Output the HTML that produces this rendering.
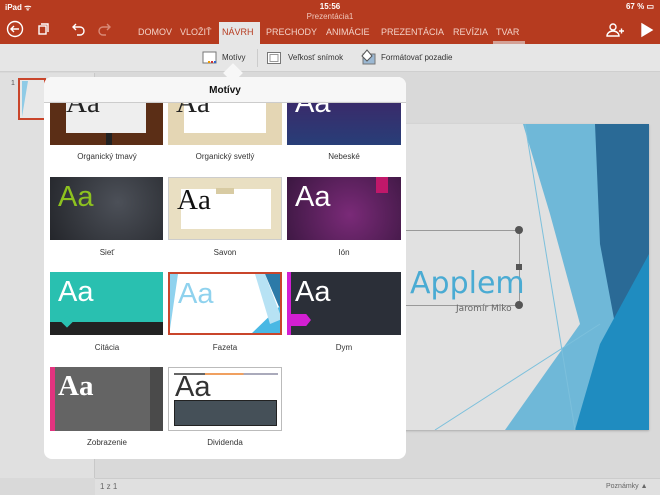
<!DOCTYPE html>
<html><head><meta charset="utf-8"><style>
*{margin:0;padding:0;box-sizing:border-box}
body{width:660px;height:495px;overflow:hidden;position:relative;background:#d9d9d9;font-family:"Liberation Sans",sans-serif}
.abs{position:absolute}
.top{left:0;top:0;width:660px;height:44px;background:#b63b1f;color:#fff}
.tab{position:absolute;top:27px;font-size:9px;color:#f3d2c8}
.tb{left:0;top:44px;width:660px;height:28px;background:#e6e6e6;border-bottom:1px solid #cfcfcf;font-size:8px;color:#333}
.lbl{position:absolute;font-size:8px;color:#333;text-align:center;width:114px}
.th{position:absolute;overflow:hidden}
.aa{position:absolute;font-size:29px;line-height:1}
</style></head><body>
<div class="abs top">
 <div class="abs" style="left:5px;top:2px;font-size:8px;font-weight:bold">iPad ᯤ</div>
 <div class="abs" style="left:0;width:660px;top:2px;text-align:center;font-size:8px;font-weight:bold">15:56</div>
 <div class="abs" style="left:0;width:660px;top:12px;text-align:center;font-size:8px;color:#f0c8bc">Prezentácia1</div>
 <div class="abs" style="right:6px;top:2px;font-size:8px;font-weight:bold">67 % ▭</div>
 <svg class="abs" style="left:6px;top:20px" width="110" height="20" viewBox="0 0 110 20" fill="none" stroke="#fff" stroke-width="1.4">
  <circle cx="9" cy="9" r="7.5"/><path d="M13 9H5M8 6L5 9L8 12"/>
  <rect x="33" y="6" width="7" height="8"/><path d="M35 4h7v8"/>
  <path d="M68 7h6a4 4 0 0 1 0 8h-3M70 4l-3 3 3 3"/>
  <path d="M103 7h-6a4 4 0 0 0 0 8h3M101 4l3 3-3 3" stroke="#d98a77"/>
 </svg>
 <div class="abs" style="left:219px;top:22px;width:41px;height:22px;background:#e6e6e6"></div>
 <div class="tab" style="left:138px">DOMOV</div>
 <div class="tab" style="left:180px">VLOŽIŤ</div>
 <div class="tab" style="left:222px;color:#b63b1f">NÁVRH</div>
 <div class="tab" style="left:266px">PRECHODY</div>
 <div class="tab" style="left:326px">ANIMÁCIE</div>
 <div class="tab" style="left:381px">PREZENTÁCIA</div>
 <div class="tab" style="left:453px">REVÍZIA</div>
 <div class="tab" style="left:496px">TVAR</div>
 <div class="abs" style="left:493px;top:41px;width:32px;height:3px;background:#e6e6e6;opacity:.6"></div>
 <svg class="abs" style="left:606px;top:22px" width="50" height="16" viewBox="0 0 50 16" fill="none" stroke="#fff" stroke-width="1.4">
  <circle cx="7" cy="5" r="3"/><path d="M1 14a6 5 0 0 1 12 0zM13 9h5M15.5 6.5v5"/>
  <path d="M36 2l10 6-10 6z" fill="#fff"/>
 </svg>
</div>
<div class="abs tb">
 <svg class="abs" style="left:202px;top:7px" width="16" height="14"><rect x="1" y="1" width="13" height="11" fill="#fff" stroke="#777"/><rect x="9" y="10" width="2" height="2" fill="#c33"/><rect x="12" y="10" width="2" height="2" fill="#36c"/><rect x="6" y="10" width="2" height="2" fill="#e90"/></svg>
 <div class="abs" style="left:222px;top:9px">Motívy</div>
 <div class="abs" style="left:257px;top:5px;width:1px;height:18px;background:#ccc"></div>
 <svg class="abs" style="left:267px;top:8px" width="14" height="12"><rect x=".5" y=".5" width="13" height="11" fill="#fff" stroke="#777"/><rect x="3" y="2.5" width="8" height="7" fill="none" stroke="#999"/></svg>
 <div class="abs" style="left:288px;top:9px">Veľkosť snímok</div>
 <svg class="abs" style="left:360px;top:5px" width="16" height="16"><rect x="3" y="5" width="12" height="10" fill="#9bb8d3" stroke="#777"/><path d="M2 7l5-6 5 6-5 5z" fill="#fff" stroke="#555"/></svg>
 <div class="abs" style="left:381px;top:9px">Formátovať pozadie</div>
</div>
<!-- left pane -->
<div class="abs" style="left:0;top:73px;width:95px;height:405px;background:#e0e0e0;border-right:1px solid #c8c8c8"></div>
<div class="abs" style="left:11px;top:80px;font-size:7px;color:#555">1</div>
<div class="abs" style="left:18px;top:78px;width:28px;height:42px;border:2px solid #c9452b;background:#e8e8e8;overflow:hidden"><div class="abs" style="left:2px;top:1px;width:6px;height:36px;background:#8fcbe6;clip-path:polygon(0 0,100% 0,0 100%)"></div></div>
<!-- slide -->
<div class="abs" style="left:400px;top:124px;width:249px;height:306px;background:#e1e1e1;overflow:hidden;box-shadow:0 1px 2px #aaa">
 <svg width="249" height="306" viewBox="0 0 249 306" style="position:absolute;left:0;top:0">
  <polygon points="123,0 195,0 249,0 249,306 105,306 180,200 150,90" fill="#6fb8d8"/>
  <polygon points="195,0 249,0 249,270 215,200 200,120" fill="#2a6a96"/>
  <polygon points="249,130 249,306 175,306 200,220" fill="#1f8cc0"/>
  <line x1="125" y1="0" x2="175" y2="306" stroke="#7cc0dc" stroke-width="1"/>
  <line x1="35" y1="306" x2="200" y2="200" stroke="#7cc0dc" stroke-width="1"/>
 </svg>
 <div class="abs" style="left:0;top:106px;width:120px;height:76px;border:1px solid #999;border-left:none"></div>
 <div class="abs" style="left:115px;top:102px;width:8px;height:8px;border-radius:50%;background:#555"></div>
 <div class="abs" style="left:116px;top:140px;width:6px;height:6px;background:#555"></div>
 <div class="abs" style="left:115px;top:177px;width:8px;height:8px;border-radius:50%;background:#555"></div>
 <div class="abs" style="left:10px;top:142px;font-size:30px;color:#4aabd3;font-family:'DejaVu Sans',sans-serif">Applem</div>
 <div class="abs" style="left:56px;top:180px;font-size:9px;color:#666;font-family:'DejaVu Sans',sans-serif">Jaromír Miko</div>
</div>
<div class="abs" style="left:95px;top:478px;width:565px;height:17px;background:#e0e0e0;border-top:1px solid #ccc"></div>
<div class="abs" style="left:100px;top:482px;font-size:8px;color:#666">1 z 1</div>
<div class="abs" style="left:606px;top:483px;font-size:7px;color:#666">Poznámky ▲</div>
<!-- popover -->
<div class="abs" style="left:226px;top:66px;width:14px;height:14px;background:#f7f7f7;transform:rotate(45deg)"></div>
<div class="abs" style="left:44px;top:77px;width:362px;height:382px;background:#fff;border-radius:8px;overflow:hidden">
 <div class="th" style="left:6px;top:24px;width:113px;height:44px;background:#5b2e16"><div class="abs" style="left:16px;top:0;width:80px;height:32px;background:#eee"></div><div class="abs" style="left:56px;top:32px;width:6px;height:12px;background:#222"></div><div class="aa" style="left:16px;top:-12px;font-family:'Liberation Serif',serif;color:#222">Aa</div></div>
 <div class="th" style="left:124px;top:24px;width:114px;height:44px;background:#e4d6b4"><div class="abs" style="left:16px;top:0;width:82px;height:32px;background:#fff"></div><div class="aa" style="left:8px;top:-12px;font-family:'Liberation Serif',serif;color:#222">Aa</div></div>
 <div class="th" style="left:243px;top:24px;width:114px;height:44px;background:linear-gradient(#3a2a6a,#283e78)"><div class="aa" style="left:8px;top:-12px;color:#fff">Aa</div></div>
 <div class="lbl" style="left:6px;top:75px">Organický tmavý</div>
 <div class="lbl" style="left:124px;top:75px">Organický svetlý</div>
 <div class="lbl" style="left:243px;top:75px">Nebeské</div>
 <div class="abs" style="left:0;top:0;width:362px;height:26px;background:rgba(247,247,247,.97);border-bottom:1px solid #ccc;text-align:center;font-size:10px;font-weight:bold;color:#111;line-height:28px">Motívy</div>
 <div class="th" style="left:6px;top:100px;width:113px;height:63px;background:radial-gradient(circle at 60% 40%,#4c5058,#24262b)"><div class="aa" style="left:8px;top:6px;color:#8dc21f">Aa</div></div>
 <div class="th" style="left:124px;top:100px;width:114px;height:63px;background:#e9dfc2;border:1px solid #ccc"><div class="abs" style="left:12px;top:11px;width:90px;height:40px;background:#fff"></div><div class="abs" style="left:47px;top:10px;width:18px;height:6px;background:#d8cba3"></div><div class="aa" style="left:8px;top:8px;font-family:'Liberation Serif',serif;color:#111">Aa</div></div>
 <div class="th" style="left:243px;top:100px;width:114px;height:63px;background:radial-gradient(circle at 55% 60%,#7a2a78,#3a1740)"><div class="abs" style="left:89px;top:0;width:12px;height:16px;background:#c0186a"></div><div class="aa" style="left:8px;top:6px;color:#fff">Aa</div></div>
 <div class="lbl" style="left:6px;top:171px">Sieť</div>
 <div class="lbl" style="left:124px;top:171px">Savon</div>
 <div class="lbl" style="left:243px;top:171px">Ión</div>
 <div class="th" style="left:6px;top:195px;width:113px;height:63px;background:#29c0b0"><div class="abs" style="left:0;top:50px;width:113px;height:13px;background:#222"></div><div class="abs" style="left:13px;top:46px;width:8px;height:8px;background:#29c0b0;transform:rotate(45deg)"></div><div class="aa" style="left:8px;top:6px;color:#fff">Aa</div></div>
 <div class="th" style="left:124px;top:195px;width:114px;height:63px;background:#fff;border:2px solid #c9452b"><svg class="abs" style="left:0;top:0" width="112" height="61"><polygon points="0,0 8,0 0,55" fill="#8fd2ee"/><polygon points="95,0 112,0 112,40" fill="#2c7aa8"/><polygon points="112,30 112,61 80,61" fill="#49b8e4"/><polygon points="85,0 95,0 112,45 100,50" fill="#b7e2f4"/></svg><div class="aa" style="left:8px;top:6px;color:#8fd2ee">Aa</div></div>
 <div class="th" style="left:243px;top:195px;width:114px;height:63px;background:#2b2f38"><div class="abs" style="left:0;top:0;width:4px;height:63px;background:#d21fd2"></div><div class="abs" style="left:0;top:42px;width:24px;height:12px;background:#d21fd2;clip-path:polygon(0 0,80% 0,100% 50%,80% 100%,0 100%)"></div><div class="aa" style="left:8px;top:6px;color:#fff">Aa</div></div>
 <div class="lbl" style="left:6px;top:266px">Citácia</div>
 <div class="lbl" style="left:124px;top:266px">Fazeta</div>
 <div class="lbl" style="left:243px;top:266px">Dym</div>
 <div class="th" style="left:6px;top:290px;width:113px;height:64px;background:#646464"><div class="abs" style="left:0;top:0;width:5px;height:64px;background:#e2337f"></div><div class="abs" style="left:100px;top:0;width:13px;height:64px;background:#4a4a4a"></div><div class="aa" style="left:8px;top:5px;font-family:'Liberation Serif',serif;font-weight:bold;color:#fff">Aa</div></div>
 <div class="th" style="left:124px;top:290px;width:114px;height:64px;background:#fff;border:1px solid #bbb"><div class="abs" style="left:5px;top:5px;width:104px;height:2px;background:linear-gradient(90deg,#666 30%,#f0a060 30%,#f0a060 67%,#aab 67%)"></div><div class="abs" style="left:5px;top:32px;width:103px;height:26px;background:#455058;border:1px solid #222"></div><div class="aa" style="left:6px;top:5px;color:#333">Aa</div></div>
 <div class="lbl" style="left:6px;top:361px">Zobrazenie</div>
 <div class="lbl" style="left:124px;top:361px">Dividenda</div>
</div>
</body></html>
